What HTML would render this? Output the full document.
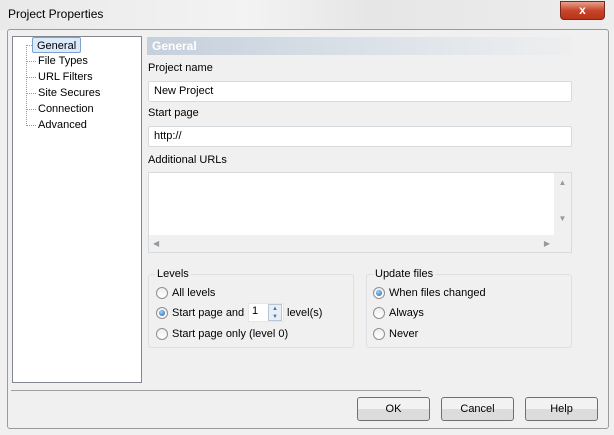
<!DOCTYPE html>
<html><head><style>
*{box-sizing:border-box;margin:0;padding:0}
body{width:614px;height:435px;background:#f0f0f0;font-family:"Liberation Sans",sans-serif;font-size:11px;color:#000;position:relative;overflow:hidden}
.a{position:absolute}
.inp{position:absolute;background:#fff;border:1px solid #d6dbe0;border-radius:2px;padding:3px 5px;font-size:11px}
.rad{position:absolute;width:12px;height:12px;border-radius:50%;border:1px solid #8e8f8f;background:linear-gradient(#eee,#fff)}
.rad.on::after{content:"";position:absolute;left:2px;top:2px;width:6px;height:6px;border-radius:50%;background:radial-gradient(circle at 40% 35%,#9fd4ff,#1560a8)}
.btn{position:absolute;height:24px;border:1px solid #707070;border-radius:3px;background:linear-gradient(#f2f2f2 50%,#dcdcdc 50%);text-align:center;line-height:22px}
.grp{position:absolute;border:1px solid #dcdfe3;border-radius:3px}
.lg{position:absolute;top:-7px;left:6px;background:#f0f0f0;padding:0 2px}
.ti{position:absolute;left:38px;height:16px;line-height:16px}
.tl{position:absolute;left:26px;width:10px;border-top:1px dotted #999}
</style></head><body>
<div class="a" style="left:0;top:0;width:614px;height:30px;background:linear-gradient(90deg,#e9e9e9,#f3f3f3 40%,#e6e6e6 60%,#ededed)"></div>
<div class="a" style="left:8px;top:7px;font-size:12px">Project Properties</div>
<div class="a" style="left:560px;top:1px;width:45px;height:19px;border:1px solid #7a2a1c;border-radius:0 0 4px 4px;background:linear-gradient(#e8a08c,#c7452b 50%,#b83418);color:#fff;font-weight:bold;text-align:center;line-height:16px;font-size:12px">x</div>
<div class="a" style="left:7px;top:29px;width:602px;height:400px;border:1px solid #9a9a9a;border-radius:3px;background:#f0f0f0"></div>
<div class="a" style="left:12px;top:36px;width:130px;height:347px;background:#fff;border:1px solid #828790"></div>
<div class="a" style="left:26px;top:45px;height:81px;border-left:1px dotted #999"></div>
<div class="tl" style="top:45px"></div><div class="tl" style="top:61px"></div><div class="tl" style="top:77px"></div><div class="tl" style="top:93px"></div><div class="tl" style="top:109px"></div><div class="tl" style="top:125px"></div>
<div class="ti" style="left:32px;top:37px;border:1px solid #7da2ce;background:#dcebfc;padding:0 4px;border-radius:2px">General</div>
<div class="ti" style="top:53px">File Types</div>
<div class="ti" style="top:69px">URL Filters</div>
<div class="ti" style="top:85px">Site Secures</div>
<div class="ti" style="top:101px">Connection</div>
<div class="ti" style="top:117px">Advanced</div>
<div class="a" style="left:147px;top:37px;width:425px;height:18px;background:linear-gradient(90deg,#c5d0dc,#e6eaee 80%,#eee);color:#fff;font-weight:bold;font-size:12px;padding:2px 5px">General</div>
<div class="a" style="left:148px;top:62px">Project name</div>
<div class="inp" style="left:148px;top:81px;width:424px;height:21px">New Project</div>
<div class="a" style="left:148px;top:107px">Start page</div>
<div class="inp" style="left:148px;top:126px;width:424px;height:21px">http://</div>
<div class="a" style="left:148px;top:154px">Additional URLs</div>
<div class="a" style="left:148px;top:172px;width:424px;height:81px;border:1px solid #d6dbe0;background:#fff"></div>
<div class="a" style="left:149px;top:235px;width:406px;height:17px;background:#f0f0f0;color:#999;font-size:8px;line-height:17px;padding-left:4px">◀<span style="float:right;margin-right:5px">▶</span></div>
<div class="a" style="left:554px;top:173px;width:17px;height:79px;background:#f0f0f0;color:#999;font-size:8px;text-align:center;padding-top:5px">▲<br><br><br><br>▼</div>
<div class="grp" style="left:148px;top:274px;width:206px;height:74px"><span class="lg">Levels</span></div>
<div class="rad" style="left:156px;top:287px"></div><div class="a" style="left:172px;top:287px">All levels</div>
<div class="rad on" style="left:156px;top:307px"></div><div class="a" style="left:172px;top:307px">Start page and</div>
<div class="a" style="left:248px;top:303px;width:36px;height:19px;background:#fff;border:1px solid #e3e6ea;padding:1px 3px">1</div>
<div class="a" style="left:268px;top:304px;width:14px;height:17px;border:1px solid #b9c6d6;background:#e8eef6;color:#4a74b0;font-size:6px;line-height:8px;text-align:center">▲<br>▼</div>
<div class="a" style="left:287px;top:307px">level(s)</div>
<div class="rad" style="left:156px;top:328px"></div><div class="a" style="left:172px;top:328px">Start page only (level 0)</div>
<div class="grp" style="left:366px;top:274px;width:206px;height:74px"><span class="lg">Update files</span></div>
<div class="rad on" style="left:373px;top:287px"></div><div class="a" style="left:389px;top:287px">When files changed</div>
<div class="rad" style="left:373px;top:307px"></div><div class="a" style="left:389px;top:307px">Always</div>
<div class="rad" style="left:373px;top:328px"></div><div class="a" style="left:389px;top:328px">Never</div>
<div class="a" style="left:11px;top:390px;width:410px;border-top:1px solid #a0a0a0"></div>
<div class="btn" style="left:357px;top:397px;width:73px">OK</div>
<div class="btn" style="left:441px;top:397px;width:73px">Cancel</div>
<div class="btn" style="left:525px;top:397px;width:73px">Help</div>
</body></html>
